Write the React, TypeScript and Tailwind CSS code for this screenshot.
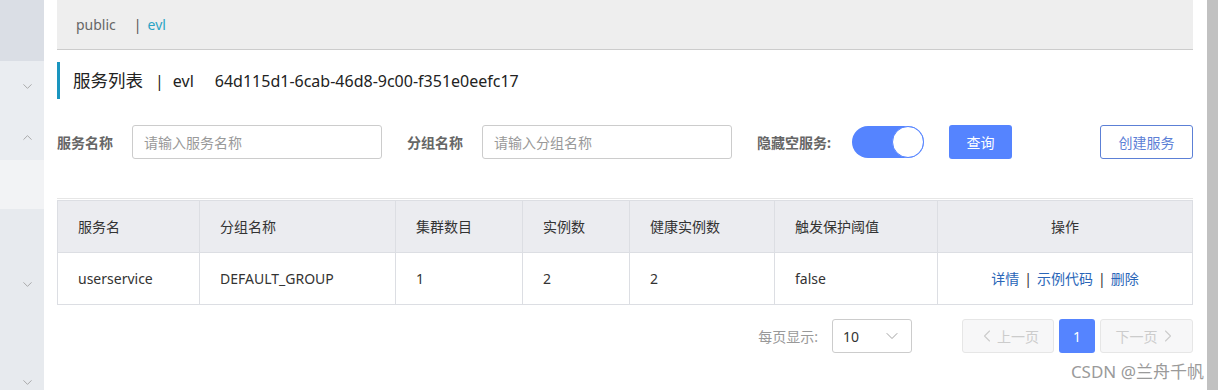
import { ChevronDown, ChevronUp, ChevronLeft, ChevronRight } from "lucide-react";

const font = "font-['Noto_Sans','Noto_Sans_CJK_SC',sans-serif]";

const columns = ["服务名", "分组名称", "集群数目", "实例数", "健康实例数", "触发保护阈值"];
const row = ["userservice", "DEFAULT_GROUP", "1", "2", "2", "false"];

export default function App() {
  return (
    <div className={`relative flex h-[390px] w-[1218px] overflow-hidden bg-white ${font}`}>
      {/* Sidebar */}
      <aside className="flex w-[44px] shrink-0 flex-col bg-[#e7eaee]">
        <div className="h-[62px] bg-[#dadee5]" />
        <div className="flex h-[100px] flex-col items-center bg-[#eaedf1] pl-[10px] text-[#9a9a9a]">
          <ChevronDown size={15} strokeWidth={1.3} className="mt-[18px]" />
          <ChevronUp size={15} strokeWidth={1.3} className="mt-[36px]" />
        </div>
        <div className="h-[50px] bg-[#f2f3f5]" />
        <div className="flex flex-1 flex-col items-center pl-[10px] text-[#9a9a9a]">
          <ChevronDown size={15} strokeWidth={1.3} className="mt-[68px]" />
          <ChevronDown size={15} strokeWidth={1.3} className="mt-[83px]" />
        </div>
      </aside>

      {/* Main */}
      <main className="flex flex-1 flex-col pl-[13px] pr-[14px]">
        <div className="flex h-[50px] items-center border-b border-[#cccccc] bg-[#eeeeee] pl-[19px] text-[14px] text-[#666]">
          <span>public</span>
          <span className="ml-[18px] text-[#555]">|</span>
          <span className="ml-[6px] text-[#2aa3c4]">evl</span>
        </div>

        <div className="mt-[12px] flex h-[37px] items-center border-l-[3px] border-[#1a95bf] pl-[13px] text-[16px] text-[#222]">
          <span className="text-[17.5px]">服务列表</span>
          <span className="ml-[12px]">|</span>
          <span className="ml-[9px]">evl</span>
          <span className="ml-[21px]">64d115d1-6cab-46d8-9c00-f351e0eefc17</span>
        </div>

        {/* Filters */}
        <div className="mt-[26px] flex h-[34px] items-center text-[14px]">
          <label className="w-[75px] font-bold text-[#666]">服务名称</label>
          <div className="flex h-[34px] w-[250px] items-center rounded-[3px] border border-[#cccccc] pl-[11px] text-[#999]">
            请输入服务名称
          </div>
          <label className="ml-[25px] w-[75px] font-bold text-[#666]">分组名称</label>
          <div className="flex h-[34px] w-[250px] items-center rounded-[3px] border border-[#cccccc] pl-[11px] text-[#999]">
            请输入分组名称
          </div>
          <label className="ml-[25px] w-[95px] font-bold text-[#666]">隐藏空服务:</label>
          <div className="flex h-[32px] w-[72px] items-center justify-end rounded-full bg-[#5584ff]">
            <div className="h-[32px] w-[32px] rounded-full border border-[#5584ff] bg-white" />
          </div>
          <button className="ml-[25px] h-[34px] w-[63px] rounded-[3px] bg-[#5584ff] text-white">查询</button>
          <button className="ml-auto h-[34px] w-[93px] rounded-[3px] border border-[#5c80d6] bg-white text-[#5c80d6]">
            创建服务
          </button>
        </div>

        <div className="mt-[39px] h-px bg-[#e6e6e6]" />

        {/* Table */}
        <div className="mt-px border border-[#dcdee3] text-[14px] text-[#333]">
          <div className="grid h-[51px] grid-cols-[142px_196px_127px_107px_145px_163px_1fr] items-center bg-[#ebecf0]">
            {columns.map((c) => (
              <div key={c} className="flex h-full items-center border-r border-[#dcdee3] pl-[20px]">
                {c}
              </div>
            ))}
            <div className="flex h-full items-center justify-center">操作</div>
          </div>
          <div className="grid h-[52px] grid-cols-[142px_196px_127px_107px_145px_163px_1fr] items-center border-t border-[#dcdee3]">
            {row.map((c, i) => (
              <div key={i} className="flex h-full items-center border-r border-[#dcdee3] pl-[20px]">
                {c}
              </div>
            ))}
            <div className="flex h-full items-center justify-center text-[#2a66b8]">
              <span>详情</span>
              <span className="mx-[5px] text-[#333]">|</span>
              <span>示例代码</span>
              <span className="mx-[5px] text-[#333]">|</span>
              <span>删除</span>
            </div>
          </div>
        </div>

        {/* Pagination */}
        <div className="mt-[14px] flex h-[34px] items-center justify-end text-[14px]">
          <span className="text-[#999]">每页显示:</span>
          <div className="ml-[14px] flex h-[34px] w-[80px] items-center justify-between rounded-[3px] border border-[#cccccc] pl-[10px] pr-[9px] text-[#333]">
            <span>10</span>
            <ChevronDown size={20} strokeWidth={1.1} className="text-[#999]" />
          </div>
          <div className="ml-[50px] flex h-[34px] w-[92px] items-center justify-center rounded-[3px] border border-[#e6e6e6] bg-[#f7f7f8] text-[#cccccc]">
            <ChevronLeft size={20} strokeWidth={1.3} />
            <span>上一页</span>
          </div>
          <div className="ml-[5px] flex h-[34px] w-[36px] items-center justify-center rounded-[3px] bg-[#5584ff] text-white">1</div>
          <div className="ml-[5px] flex h-[34px] w-[93px] items-center justify-center rounded-[3px] border border-[#e6e6e6] bg-[#f7f7f8] text-[#cccccc]">
            <span>下一页</span>
            <ChevronRight size={20} strokeWidth={1.3} />
          </div>
        </div>
      </main>

      {/* Scrollbar */}
      <div className="w-[11px] shrink-0 bg-[#c1c1c1]" />

      {/* Watermark */}
      <div className="absolute bottom-[6px] right-[14px] text-[17px] text-[#9a9a9a]">CSDN @兰舟千帆</div>
    </div>
  );
}
